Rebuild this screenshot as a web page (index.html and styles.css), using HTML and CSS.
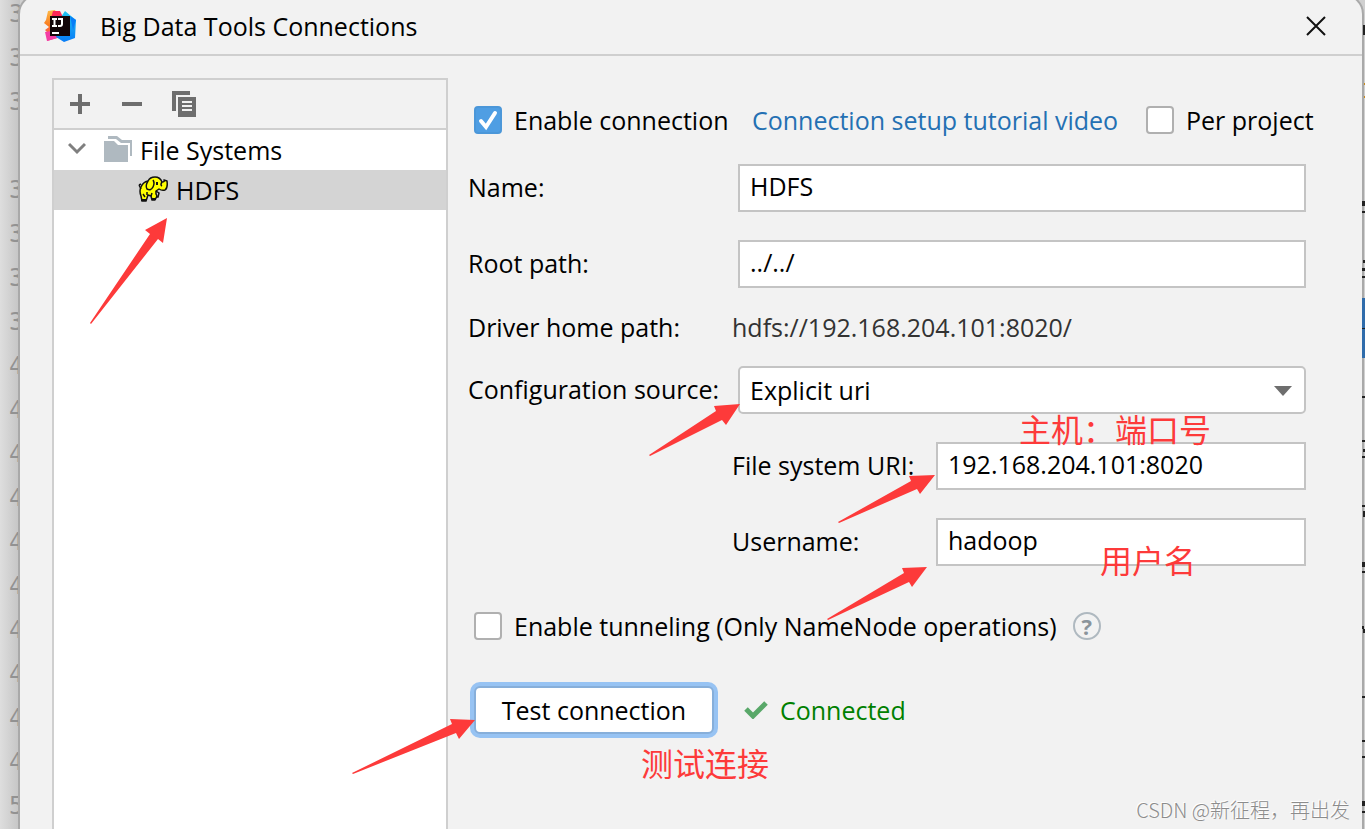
FILE: index.html
```html
<!DOCTYPE html>
<html lang="en">
<head>
	<meta charset="UTF-8">
	<title>Big Data Tools Connections</title>
	<link rel="stylesheet" href="styles.css">
</head>
<body>
	<div id="desktop">
		<div class="gutter">
			<span>3</span><span>3</span><span>3</span><span></span><span>3</span>
			<span>3</span><span>3</span><span>3</span><span>4</span><span>4</span>
			<span>4</span><span>4</span><span>4</span><span>4</span><span>4</span>
			<span>4</span><span>4</span><span>4</span><span>5</span>
		</div>

		<div class="dialog">
			<header class="titlebar">
				<svg class="logo" width="32" height="32" viewBox="0 0 32 32">
					<defs>
						<linearGradient id="warm" x1="0" y1="0" x2="0" y2="1">
							<stop offset="0" stop-color="#fdbb4a"/>
							<stop offset="0.5" stop-color="#f97a1e"/>
							<stop offset="1" stop-color="#f5338f"/>
						</linearGradient>
						<linearGradient id="cold" x1="0" y1="0" x2="0" y2="1">
							<stop offset="0" stop-color="#20c3f0"/>
							<stop offset="1" stop-color="#087cf7"/>
						</linearGradient>
					</defs>
					<path fill="url(#warm)" d="M4 1 11 0 15 8 13 28 3 31 4 23 1 20 5 17 0 13 2 10Z"/>
					<path fill="#fe2857" d="M9 1 16 1 19 7 14 14 7 8Z"/>
					<path fill="#f43da4" d="M1 22 14 20 17 27 3 31Z"/>
					<path fill="url(#cold)" d="M21 1 27 6 32 10 31 28 20 32 12 27 17 7Z"/>
					<path fill="#087cf7" d="M26 6 32 10 29 20Z"/>
					<path fill="#120508" d="M6 6H26V26H6Z"/>
					<path fill="none" stroke="#fff" stroke-width="2" d="M8 9H13M10.500 9V16M8 16H13M14 9H18V14Q18 16 16 16H14"/>
					<path fill="#fff" d="M8 22H15V24H8Z"/>
				</svg>
				<h1>Big Data Tools Connections</h1>
				<button class="close" aria-label="Close">
					<svg width="20" height="20" viewBox="0 0 20 20"><path d="M1 1 19 19M19 1 1 19" stroke="#111" stroke-width="2"/></svg>
				</button>
			</header>

			<div class="content">
				<aside class="connections">
					<div class="toolbar">
						<button aria-label="Add">
							<svg width="20" height="20" viewBox="0 0 20 20"><path d="M8 0h4v8h8v4h-8v8H8v-8H0V8h8Z"/></svg>
						</button>
						<button aria-label="Remove">
							<svg width="20" height="20" viewBox="0 0 20 20"><path d="M0 8h20v4H0Z"/></svg>
						</button>
						<button aria-label="Duplicate">
							<svg width="24" height="26" viewBox="0 0 24 26">
								<path d="M0 0h18v4H4v16H0ZM6 6h18v20H6Z"/>
								<path d="M10 11h10M10 15h10M10 19h10" stroke="#f2f2f2" stroke-width="2"/>
							</svg>
						</button>
					</div>
					<ul class="tree">
						<li class="group">
							<svg class="chevron" width="18" height="16" viewBox="0 0 18 16"><path d="M1 2 9 10 17 2" fill="none" stroke="#7f7f7f" stroke-width="3"/></svg>
							<svg width="28" height="28" viewBox="0 0 28 28">
								<path fill="#afb9c0" d="M4 0h9l5 4h10v16h-2V7H17l-5-4H4Z"/>
								<path fill="#afb9c0" d="M0 5h10l4 4h10v17H0Z"/>
							</svg>
							<span>File Systems</span>
						</li>
						<li class="item selected">
							<svg width="30" height="28" viewBox="0 0 30 28">
								<path fill="#ff0" stroke="#111" stroke-width="1.500" stroke-linejoin="round" d="M3 11Q5 6 10 5Q12 1 17 1Q22 1 24 6Q27 6 26 4L29 5Q30 12 27 14Q24 15 21 13L18 15V18L19 20L17 24H14L13 20L10 19L8 25H4L3 20Q1 15 3 11Z"/>
								<path fill="none" stroke="#111" stroke-width="1.500" d="M10 5Q7 10 9 13Q13 15 15 11Q17 7 15 4M3 13 1 9M1 9 3 8M24 6Q22 9 24 10M9 19V16M13 20 14 17M18 15 21 17 20 21H18M5 18 7 21"/>
								<path fill="#111" d="M18 6h2v3h-2ZM3 23h5v2H3ZM14 22h4v2h-4Z"/>
							</svg>
							<span>HDFS</span>
						</li>
					</ul>
				</aside>

				<form class="settings">
					<div class="options">
						<label class="check"><input type="checkbox" checked>Enable connection</label>
						<a href="#">Connection setup tutorial video</a>
						<label class="check"><input type="checkbox">Per project</label>
					</div>

					<div class="row">
						<label for="name">Name:</label>
						<input class="field" type="text" id="name" value="HDFS">
					</div>
					<div class="row">
						<label for="root">Root path:</label>
						<input class="field" type="text" id="root" value="../../">
					</div>
					<div class="row plain">
						<span>Driver home path:</span>
						<output>hdfs://192.168.204.101:8020/</output>
					</div>
					<div class="row">
						<label for="source">Configuration source:</label>
						<div class="combo">
							<select class="field" id="source">
								<option>Explicit uri</option>
							</select>
							<svg width="18" height="10" viewBox="0 0 18 10"><path d="M0 0h18L9 10Z" fill="#6e6e6e"/></svg>
						</div>
					</div>
					<div class="row nested">
						<label for="uri">File system URI:</label>
						<input class="field" type="text" id="uri" value="192.168.204.101:8020">
					</div>
					<div class="row nested">
						<label for="user">Username:</label>
						<input class="field" type="text" id="user" value="hadoop">
					</div>

					<div class="tunneling">
						<label class="check"><input type="checkbox">Enable tunneling (Only NameNode operations)</label>
						<button type="button" class="help" aria-label="Help">?</button>
					</div>

					<div class="test">
						<button type="button" class="test-button">Test connection</button>
						<svg width="24" height="18" viewBox="0 0 24 18"><path d="M2 8 9 15 22 2" fill="none" stroke="#59a869" stroke-width="5"/></svg>
						<span class="status">Connected</span>
					</div>
				</form>
			</div>
		</div>

		<!-- editor text that sticks out behind the dialog -->
		<svg class="editor-edge" width="3" height="829" viewBox="0 0 3 829">
			<path fill="#2f6cab" d="M0 298h3v60H0Z"/>
			<path fill="#c98a1b" d="M2 83h1v2h-1ZM2 96h1v2h-1Z"/>
			<path fill="#222" d="M1 25h2v10H1ZM0 201h3v5H0ZM0 211h3v2H0ZM1 260h2v3H1ZM0 268h3v3H0ZM0 276h3v2H0ZM0 328h3v1H0ZM0 396h3v2H0ZM0 440h3v2H0ZM1 449h2v3H1ZM0 456h3v2H0ZM0 505h3v2H0ZM1 511h2v6H1ZM0 562h3v5H0ZM0 571h3v2H0ZM0 626h2v3H0ZM1 629h2v4H1ZM0 696h3v2H0ZM0 740h3v2H0ZM0 756h3v2H0ZM0 801h3v5H0ZM0 811h3v2H0Z"/>
		</svg>

		<svg class="arrows" width="1365" height="829" viewBox="0 0 1365 829">
			<path d="M167 218 163 243 158 239 91 324 90 323 150 234 145 230Z"/>
			<path d="M740 404 726 425 722 420 650 456 649 455 716 411 714 406Z"/>
			<path d="M935 475 920 494 917 489 839 523 838 522 911 481 909 476Z"/>
			<path d="M927 567 912 587 909 582 828 620 827 619 904 573 902 568Z"/>
			<path d="M475 720 459 739 456 733 353 774 352 773 452 724 450 719Z"/>
		</svg>
		<div class="note host" lang="zh">主机：端口号</div>
		<div class="note username" lang="zh">用户名</div>
		<div class="note try" lang="zh">测试连接</div>
		<div class="watermark" lang="zh">CSDN @新征程，再出发</div>
	</div>
</body>
</html>
```
FILE: styles.css
```css
*{
	box-sizing: border-box;
}

body{
	margin: 0;
	font-family: "Open Sans", "Noto Sans", "Noto Sans CJK SC", sans-serif;
	font-size: 25px;
	line-height: 32px;
	color: #000;
}

button, input, select{
	font: inherit;
	color: inherit;
}

#desktop{
	position: relative;
	display: flex;
	height: 100vh;
	overflow: hidden;
	background: #d0d0d0;
}

/* line numbers of the editor behind the dialog */
.gutter{
	flex: none;
	width: 20px;
	padding-left: 9px;
	margin-top: -8px;
	overflow: hidden;
	background: linear-gradient(to right, #dedede, #c4c4c4);
	color: #929292;
	font-family: "DejaVu Sans Mono", monospace;
	font-size: 24px;
	line-height: 44px;
}

.gutter span{
	display: block;
	height: 44px;
}

.dialog{
	position: relative;
	flex: 1;
	display: flex;
	flex-direction: column;
	margin-top: -4px;
	background: #f2f2f2;
	border-radius: 18px 18px 0 0;
	box-shadow: 0 0 0 2px #a9a9a9;
}

.titlebar{
	display: flex;
	align-items: center;
	height: 60px;
	padding: 2px 36px 0 24px;
	border-bottom: 2px solid #cfcfcf;
}

.titlebar h1{
	flex: 1;
	margin: 0 0 0 24px;
	font-size: 25px;
	font-weight: normal;
}

.toolbar button,
.close{
	display: flex;
	justify-content: center;
	padding: 0;
	border: 0;
	background: none;
	fill: #6e6e6e;
}

.content{
	flex: 1;
	display: flex;
	padding: 22px 56px 0 32px;
}

.connections{
	flex: none;
	width: 396px;
	background: #fff;
	border: 2px solid #cfcfcf;
	border-bottom: 0;
}

.toolbar{
	display: flex;
	align-items: center;
	gap: 28px;
	height: 50px;
	padding-left: 14px;
	background: #f2f2f2;
	border-bottom: 2px solid #cfcfcf;
}

.toolbar button{
	width: 24px;
}

.tree{
	margin: 0;
	padding: 0;
	list-style: none;
}

.tree li{
	display: flex;
	align-items: center;
	gap: 8px;
	height: 40px;
}

.tree .group{
	padding-left: 14px;
}

.tree .chevron{
	margin-right: 10px;
}

.tree .item{
	padding-left: 84px;
}

.tree .selected{
	background: #d4d4d4;
}

.settings{
	flex: 1;
	padding: 26px 0 0 20px;
}

.options{
	display: grid;
	grid-template-columns: 278px 1fr 160px;
	align-items: center;
	height: 32px;
	margin-left: 6px;
	white-space: nowrap;
}

.options a{
	color: #2470b3;
	text-decoration: none;
}

.check{
	display: flex;
	align-items: center;
	gap: 12px;
	white-space: nowrap;
}

.check input{
	flex: none;
	appearance: none;
	width: 28px;
	height: 28px;
	margin: 0;
	background: #fff;
	border: 2px solid #b0b0b0;
	border-radius: 4px;
}

.check input:checked{
	background: #4f9ee3 url("data:image/svg+xml,%3Csvg xmlns='http://www.w3.org/2000/svg' viewBox='0 0 24 24'%3E%3Cpath d='M5 13l5 6L19 5' fill='none' stroke='white' stroke-width='4' stroke-linecap='round'/%3E%3C/svg%3E");
	border-color: #4b97d9;
}

.row{
	display: grid;
	grid-template-columns: 264px 1fr;
	align-items: center;
	height: 48px;
	margin-top: 28px;
}

.row label{
	padding-bottom: 2px;
}

.plain{
	height: 22px;
	line-height: 22px;
}

.plain output{
	color: #333;
}

.nested{
	grid-template-columns: 198px 1fr;
	margin-left: 264px;
}

.field{
	width: calc(100% - 6px);
	height: 48px;
	margin-left: 6px;
	padding: 0 10px 4px;
	background: #fff;
	border: 2px solid #c4c4c4;
	border-radius: 0;
	outline: none;
}

.combo{
	position: relative;
}

.combo select{
	display: block;
	appearance: none;
	padding-bottom: 0;
	border-radius: 5px;
}

.combo svg{
	position: absolute;
	right: 14px;
	top: 20px;
	pointer-events: none;
}

.tunneling{
	display: flex;
	align-items: center;
	gap: 16px;
	height: 28px;
	margin: 46px 0 0 6px;
}

.help{
	width: 28px;
	height: 28px;
	padding: 0;
	background: none;
	border: 2px solid #afb9c0;
	border-radius: 50%;
	color: #8a949b;
	font-size: 22px;
	font-weight: bold;
	line-height: 24px;
}

.test{
	display: flex;
	align-items: center;
	margin: 46px 0 0 6px;
}

.test-button{
	width: 240px;
	height: 48px;
	padding: 0;
	margin-right: 30px;
	background: #fff;
	border: 2px solid #87afda;
	border-radius: 6px;
	box-shadow: 0 0 0 4px #97c3f3;
}

.status{
	margin-left: 12px;
	color: #008000;
}

.editor-edge{
	flex: none;
	position: relative;
}

/* red marks drawn over the window */
.arrows{
	position: absolute;
	left: 0;
	top: 0;
	fill: #fd3a3a;
	pointer-events: none;
}

.note{
	position: absolute;
	color: #fd3a3a;
	font-family: "Noto Sans CJK SC", sans-serif;
	font-size: 32px;
	line-height: 40px;
	white-space: nowrap;
}

.host{
	left: 1019px;
	top: 408px;
}

.username{
	left: 1100px;
	top: 539px;
}

.try{
	left: 641px;
	top: 742px;
}

.watermark{
	position: absolute;
	right: 15px;
	bottom: 4px;
	color: #8c8c8c;
	font-family: "Noto Sans CJK SC", sans-serif;
	font-size: 20px;
	font-weight: 300;
	line-height: 30px;
	text-shadow: -1px -1px #fff;
}
```
